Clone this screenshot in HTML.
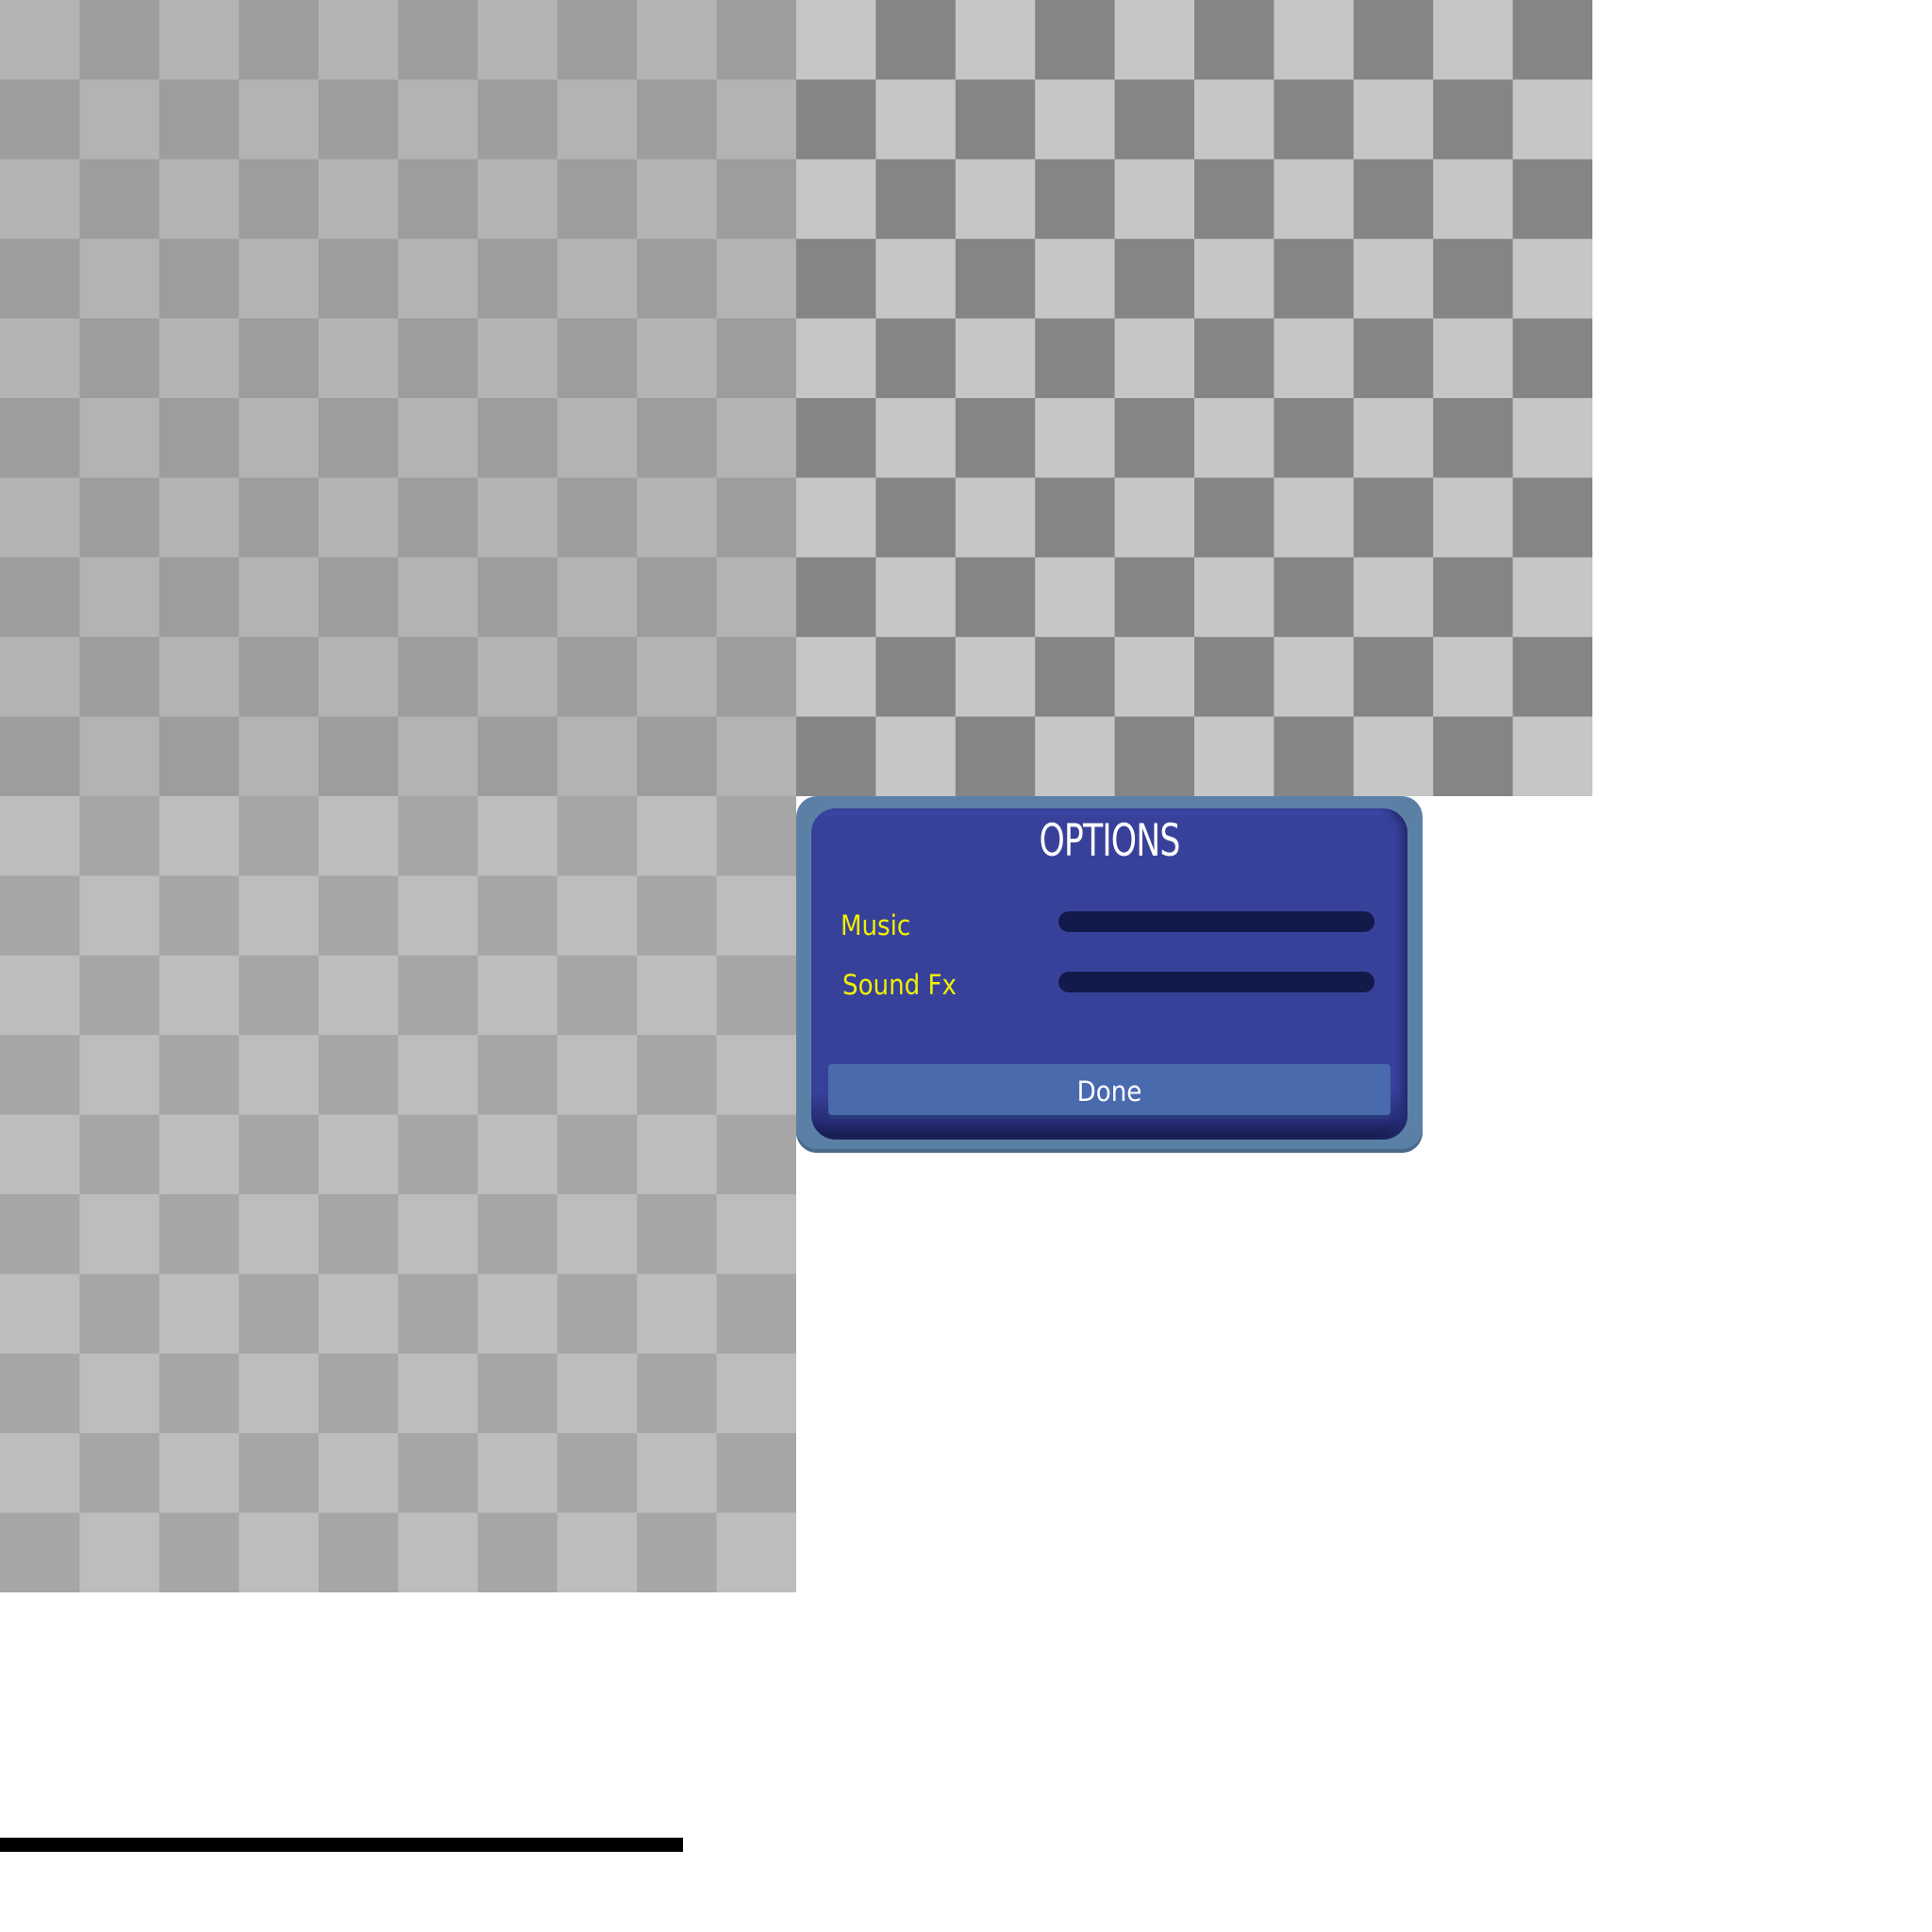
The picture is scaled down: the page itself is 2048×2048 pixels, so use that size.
<!DOCTYPE html>
<html><head><meta charset="utf-8"><style>
html,body{margin:0;padding:0;background:#fff;width:2048px;height:2048px;overflow:hidden;position:relative;font-family:"Liberation Sans","DejaVu Sans",sans-serif}
.q{position:absolute;width:844px;height:844px}
.q1{left:0;top:0;background:repeating-conic-gradient(#9d9d9d 0 25%,#b3b3b3 0 50%) 0 0/168.8px 168.8px}
.q2{left:844px;top:0;background:repeating-conic-gradient(#858585 0 25%,#c6c6c6 0 50%) 0 0/168.8px 168.8px}
.q3{left:0;top:844px;background:repeating-conic-gradient(#a6a6a6 0 25%,#bdbdbd 0 50%) 0 0/168.8px 168.8px}
.bar{position:absolute;left:0;top:1948px;width:724px;height:15px;background:#000}
.dlg{position:absolute;left:844px;top:844px;width:664px;height:378px;background:#5a80a6;border-radius:22px;box-shadow:inset 0 -4px 0 #4a6a8c}
.pan{position:absolute;left:16px;top:13px;width:632px;height:351px;border-radius:26px;background:linear-gradient(#4450b8 0,#38419a 10px,#38419a 300px,#262e78 330px,#151a45 351px);box-shadow:inset -6px 0 8px #232a70}
.t{position:absolute;color:#fff}
.title{left:0;width:664px;top:24px;text-align:center;font-size:47px;line-height:47px;letter-spacing:-1px;transform:scaleX(.82);font-family:"DejaVu Sans Condensed","Liberation Sans Narrow",sans-serif;font-weight:normal}
.lbl{color:#f0f000;font-size:29px;line-height:29px;font-family:"DejaVu Sans Condensed","Liberation Sans",sans-serif}
.sl{position:absolute;left:278px;width:335px;height:22px;border-radius:11px;background:#121a4a}
.btn{position:absolute;left:34px;top:284px;width:596px;height:54px;background:#4a6aae;border-radius:4px;box-shadow:0 4px 0 #2a3a7a}
.btn span{position:absolute;left:0;right:0;top:15px;text-align:center;color:#fff;font-size:29px;line-height:29px;font-family:"DejaVu Sans Condensed","Liberation Sans",sans-serif}
</style></head><body>
<div class="q q1"></div><div class="q q2"></div><div class="q q3"></div>
<div class="bar"></div>
<div class="dlg">
<div class="pan"></div>
<div class="t title">OPTIONS</div>
<div class="t lbl" style="left:47px;top:123px">Music</div>
<div class="sl" style="top:122px"></div>
<div class="t lbl" style="left:49px;top:186px">Sound Fx</div>
<div class="sl" style="top:186px"></div>
<div class="btn"><span>Done</span></div>
</div>
</body></html>
